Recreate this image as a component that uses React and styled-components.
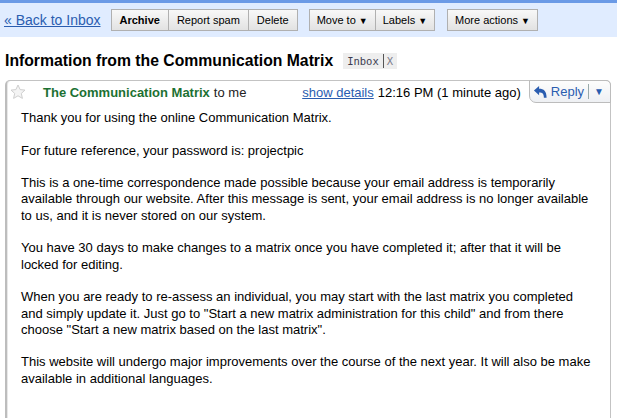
import React from 'react';
import styled, { createGlobalStyle } from 'styled-components';

const GlobalStyle = createGlobalStyle`
    body {
        margin: 0;
        background: #fff;
        font-family: "Liberation Sans", Arial, sans-serif;
        font-size: 13px;
        color: #000;
    }
`;

const linkColor = '#2a5db0';
const borderGray = '#c3c3c3';

const Page = styled.div`
    width: 617px;
    height: 418px;
    overflow: hidden;
`;

const Toolbar = styled.div`
    display: flex;
    align-items: center;
    height: 37px;
    border-top: 3px solid #6b9ae6;
    background: #e0ecff;
    padding: 0 0 1px 4px;
    box-sizing: border-box;
`;

const BackLink = styled.a`
    color: ${linkColor};
    font-size: 14px;
    text-decoration: underline;
    margin-right: 10px;
    cursor: pointer;
`;

const ButtonGroup = styled.div`
    display: flex;
    margin-right: ${p => p.gap || 0}px;
`;

const ToolButton = styled.button`
    height: 22px;
    padding: 0 ${p => (p.menu ? 7 : 8)}px;
    margin: 0;
    font-family: "Liberation Sans", Arial, sans-serif;
    font-size: 11px;
    font-weight: ${p => (p.bold ? 'bold' : 'normal')};
    color: #000;
    background: linear-gradient(#f8f8f8, #e2e2e2);
    border: 1px solid #b0b0b0;
    border-left-width: ${p => (p.first ? 1 : 0)}px;
    border-radius: 0;
    cursor: pointer;
`;

const Arrow = styled.span`
    font-size: 9px;
    margin-left: 3px;
`;

const TitleRow = styled.div`
    display: flex;
    align-items: center;
    padding: 14px 0 0 5px;
    height: 33px;
    box-sizing: border-box;
`;

const Title = styled.h1`
    margin: 0;
    font-size: 15.75px;
    font-weight: bold;
    line-height: 19px;
`;

const LabelChip = styled.span`
    display: flex;
    align-items: center;
    margin-left: 10px;
    height: 16px;
    padding: 0 4px;
    background: #eeeeee;
    font-family: "DejaVu Sans Mono", "Liberation Mono", monospace;
    font-size: 10.5px;
    color: #3c3c50;
`;

const ChipClose = styled.span`
    margin-left: 4px;
    padding-left: 3px;
    border-left: 1px solid #555;
    color: #7a7a8a;
    line-height: 14px;
`;

const Card = styled.div`
    margin: 10px 6px 0 5px;
    border: 1px solid ${borderGray};
    border-left: 2px solid #bdbdbd;
    border-radius: 5px 5px 0 0;
    box-shadow: inset 1px 0 0 #e8e8e8;
    min-height: 360px;
`;

const CardHeader = styled.div`
    display: flex;
    align-items: flex-start;
    justify-content: space-between;
    height: 21px;
`;

const Sender = styled.div`
    display: flex;
    align-items: center;
    padding: 2px 0 0 3px;
    height: 18px;
`;

const StarIcon = () => (
    <svg width="16" height="16" viewBox="0 0 16 16">
        <polygon
            points="8,1 10.1,5.6 15,6.1 11.3,9.4 12.4,14.4 8,11.8 3.6,14.4 4.7,9.4 1,6.1 5.9,5.6"
            fill="#f4f4f4"
            stroke="#cfcfcf"
            strokeWidth="1"
        />
    </svg>
);

const SenderName = styled.span`
    margin-left: 17px;
    color: #1c7132;
    font-weight: bold;
`;

const ToMe = styled.span`
    margin-left: 4px;
    color: #222;
`;

const Meta = styled.div`
    display: flex;
    align-items: flex-start;
`;

const MetaText = styled.span`
    padding-top: 4px;
    margin-right: 8px;
`;

const DetailsLink = styled.a`
    color: ${linkColor};
    text-decoration: underline;
    margin-right: 4px;
`;

const ReplyButton = styled.div`
    display: flex;
    align-items: center;
    height: 21px;
    margin: -1px -1px 0 0;
    padding: 0 6px 0 3px;
    border: 1px solid #bcbcbc;
    border-radius: 0 5px 0 7px;
    background: linear-gradient(#fdfdfd, #eef0f3);
    color: ${linkColor};
    font-size: 13px;
`;

const ReplyLabel = styled.span`
    margin-left: 3px;
    padding-right: 4px;
    border-right: 1px solid #9aa;
    line-height: 15px;
`;

const DropArrow = styled.span`
    margin-left: 5px;
    font-size: 10px;
`;

const ReplyIcon = () => (
    <svg width="15" height="14" viewBox="0 0 16 14">
        <path
            d="M1 5.5 L6.5 0.5 L6.5 3.5 C11.5 3.5 14.5 6 14.5 13 L11.6 13 C11.6 8.5 10 7.4 6.5 7.4 L6.5 10.5 Z"
            fill="#2a5db0"
        />
    </svg>
);

const Body = styled.div`
    padding: 8px 16px 0 14px;
    line-height: 16.3px;
    white-space: nowrap;
`;

const Para = styled.p`
    margin: 0 0 16.3px 0;
`;

export default function App() {
    return (
        <Page>
            <GlobalStyle/>
            <Toolbar>
                <BackLink>« Back to Inbox</BackLink>
                <ButtonGroup gap={11}>
                    <ToolButton first bold>Archive</ToolButton>
                    <ToolButton>Report spam</ToolButton>
                    <ToolButton>Delete</ToolButton>
                </ButtonGroup>
                <ButtonGroup gap={12}>
                    <ToolButton first menu>Move to<Arrow>▼</Arrow></ToolButton>
                    <ToolButton menu>Labels<Arrow>▼</Arrow></ToolButton>
                </ButtonGroup>
                <ButtonGroup>
                    <ToolButton first menu>More actions<Arrow>▼</Arrow></ToolButton>
                </ButtonGroup>
            </Toolbar>
            <TitleRow>
                <Title>Information from the Communication Matrix</Title>
                <LabelChip>Inbox<ChipClose>X</ChipClose></LabelChip>
            </TitleRow>
            <Card>
                <CardHeader>
                    <Sender>
                        <StarIcon/>
                        <SenderName>The Communication Matrix</SenderName>
                        <ToMe>to me</ToMe>
                    </Sender>
                    <Meta>
                        <MetaText>
                            <DetailsLink>show details</DetailsLink>12:16 PM (1 minute ago)
                        </MetaText>
                        <ReplyButton>
                            <ReplyIcon/>
                            <ReplyLabel>Reply</ReplyLabel>
                            <DropArrow>▼</DropArrow>
                        </ReplyButton>
                    </Meta>
                </CardHeader>
                <Body>
                    <Para>Thank you for using the online Communication Matrix.</Para>
                    <Para>For future reference, your password is: projectpic</Para>
                    <Para>
                        This is a one-time correspondence made possible because your email address is temporarily<br/>
                        available through our website. After this message is sent, your email address is no longer available<br/>
                        to us, and it is never stored on our system.
                    </Para>
                    <Para>
                        You have 30 days to make changes to a matrix once you have completed it; after that it will be<br/>
                        locked for editing.
                    </Para>
                    <Para>
                        When you are ready to re-assess an individual, you may start with the last matrix you completed<br/>
                        and simply update it. Just go to "Start a new matrix administration for this child" and from there<br/>
                        choose "Start a new matrix based on the last matrix".
                    </Para>
                    <Para>
                        This website will undergo major improvements over the course of the next year. It will also be make<br/>
                        available in additional languages.
                    </Para>
                </Body>
            </Card>
        </Page>
    );
}
